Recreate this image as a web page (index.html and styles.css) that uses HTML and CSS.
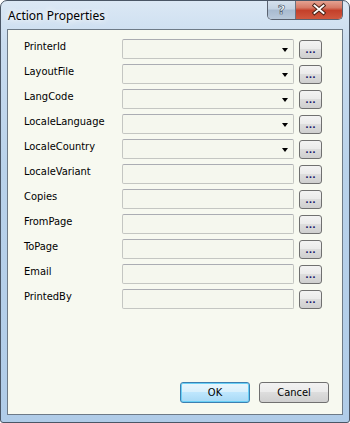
FILE: index.html
```html
<!DOCTYPE html>
<html>
<head>
<meta charset="utf-8">
<link rel="stylesheet" href="styles.css">
</head>
<body>
<div class="window">
  <div class="titlebar">
    <div class="title">Action Properties</div>
    <div class="caption-buttons">
      <div class="cap help"><span class="q">?</span></div>
      <div class="cap close">
        <svg width="16" height="13" viewBox="0 0 16 13">
          <path d="M3.5 2.5 L12.5 10 M12.5 2.5 L3.5 10" stroke="#4a2418" stroke-width="3.8" stroke-linecap="square" fill="none"/>
          <path d="M3.5 2.5 L12.5 10 M12.5 2.5 L3.5 10" stroke="#ffffff" stroke-width="1.9" stroke-linecap="square" fill="none"/>
        </svg>
      </div>
    </div>
  </div>
  <div class="client">
    <div class="rows">
      <div class="row"><span class="label">PrinterId</span><div class="field combo"><span class="arrow"></span></div><div class="dots">...</div></div>
      <div class="row"><span class="label">LayoutFile</span><div class="field combo"><span class="arrow"></span></div><div class="dots">...</div></div>
      <div class="row"><span class="label">LangCode</span><div class="field combo"><span class="arrow"></span></div><div class="dots">...</div></div>
      <div class="row"><span class="label">LocaleLanguage</span><div class="field combo"><span class="arrow"></span></div><div class="dots">...</div></div>
      <div class="row"><span class="label">LocaleCountry</span><div class="field combo"><span class="arrow"></span></div><div class="dots">...</div></div>
      <div class="row"><span class="label">LocaleVariant</span><div class="field"></div><div class="dots">...</div></div>
      <div class="row"><span class="label">Copies</span><div class="field"></div><div class="dots">...</div></div>
      <div class="row"><span class="label">FromPage</span><div class="field"></div><div class="dots">...</div></div>
      <div class="row"><span class="label">ToPage</span><div class="field"></div><div class="dots">...</div></div>
      <div class="row"><span class="label">Email</span><div class="field"></div><div class="dots">...</div></div>
      <div class="row"><span class="label">PrintedBy</span><div class="field"></div><div class="dots">...</div></div>
    </div>
    <div class="actions">
      <div class="btn default">OK</div>
      <div class="btn">Cancel</div>
    </div>
  </div>
</div>
</body>
</html>
```
FILE: styles.css
```css
html, body {
  margin: 0;
  padding: 0;
  background: #ffffff;
}

.window {
  box-sizing: border-box;
  width: 350px;
  height: 423px;
  border: 1px solid #4a5666;
  border-radius: 7px 7px 3px 3px;
  background: linear-gradient(180deg, #dbe8f5 0%, #c9dcef 10%, #b9d2ea 40%, #b0cce8 100%);
  display: flex;
  flex-direction: column;
  overflow: hidden;
}

.titlebar {
  height: 28px;
  display: flex;
  justify-content: space-between;
  align-items: flex-start;
  padding-left: 7px;
  padding-right: 6px;
}

.title {
  font-family: "Noto Sans", sans-serif;
  font-size: 12px;
  color: #000;
  margin-top: 6px;
  text-shadow: 0 0 6px #ffffff, 0 0 8px #ffffff;
}

.caption-buttons {
  display: flex;
  margin-top: -1px;
  border: 1px solid #5a6270;
  border-top: none;
  border-radius: 0 0 5px 5px;
  overflow: hidden;
  height: 19px;
}

.cap {
  display: flex;
  align-items: center;
  justify-content: center;
  height: 19px;
}

.help {
  width: 27px;
  border-right: 1px solid #6a7280;
  background: linear-gradient(180deg, #d7e2ee 0%, #c4d3e3 45%, #a9bbd0 55%, #b9c9da 100%);
}

.help .q {
  font-family: "DejaVu Sans", sans-serif;
  font-weight: bold;
  font-size: 13px;
  color: #ffffff;
  line-height: 1;
  -webkit-text-stroke: 0.6px #3a4a5c;
}

.close {
  width: 46px;
  background: linear-gradient(180deg, #e7a898 0%, #d67a66 40%, #c4402a 55%, #d0583f 100%);
}

.client {
  flex: 1;
  margin: 0 6px 7px 6px;
  border: 1px solid #6d7a87;
  background: #f7f9f0;
  display: flex;
  flex-direction: column;
  justify-content: space-between;
  padding: 9px 13px 11px 16px;
}

.rows {
  display: flex;
  flex-direction: column;
  gap: 5px;
}

.row {
  display: flex;
  align-items: center;
  height: 20px;
}

.label {
  width: 98px;
  font-family: "DejaVu Sans Condensed", "DejaVu Sans", sans-serif;
  font-stretch: condensed;
  font-size: 11px;
  color: #000;
  margin-top: -6px;
}

.field {
  box-sizing: border-box;
  width: 172px;
  height: 20px;
  border: 1px solid #c4c6c2;
  border-top-color: #abadb3;
  border-radius: 2px;
  background: #f5f7ee;
  position: relative;
}

.combo .arrow {
  position: absolute;
  right: 5px;
  top: 8px;
  width: 0;
  height: 0;
  border-left: 3.5px solid transparent;
  border-right: 3.5px solid transparent;
  border-top: 4px solid #000;
}

.dots {
  box-sizing: border-box;
  margin-left: 5px;
  width: 23px;
  height: 19px;
  margin-top: 1px;
  border: 1px solid #707070;
  border-radius: 3px;
  background: linear-gradient(180deg, #f3f3f3 0%, #ebebeb 45%, #dddddd 50%, #cfcfcf 100%);
  font-family: "DejaVu Sans", sans-serif;
  font-size: 9px;
  font-weight: bold;
  color: #1a1a6a;
  text-align: center;
  line-height: 18px;
  letter-spacing: 0px;
}

.actions {
  display: flex;
  justify-content: flex-end;
  gap: 9px;
}

.btn {
  box-sizing: border-box;
  width: 70px;
  height: 21px;
  border: 1px solid #707070;
  border-radius: 3px;
  background: linear-gradient(180deg, #f2f2f2 0%, #ebebeb 45%, #dddddd 50%, #cfcfcf 100%);
  font-family: "DejaVu Sans Condensed", "DejaVu Sans", sans-serif;
  font-stretch: condensed;
  font-size: 11px;
  text-align: center;
  line-height: 19px;
  color: #000;
}

.btn.default {
  border-color: #3c7fb1;
  box-shadow: inset 0 0 0 1px #6ad0f6;
  background: linear-gradient(180deg, #eaf6fd 0%, #d9f0fc 45%, #bee6fd 50%, #a7d9f5 100%);
}
```
